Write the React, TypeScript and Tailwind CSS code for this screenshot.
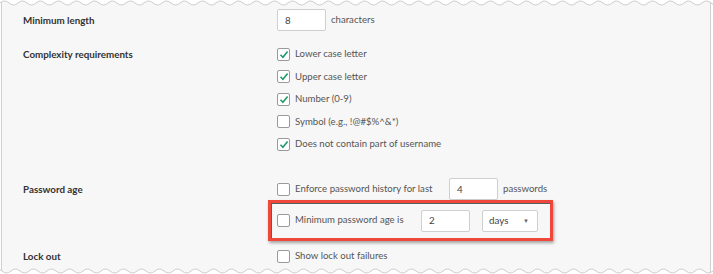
const font = { fontFamily: '"Lato", "Liberation Sans", sans-serif' };

function Check({ on }: { on?: boolean }) {
  return (
    <span className="flex h-[13px] w-[13px] shrink-0 items-center justify-center rounded-[2px] border border-[#9a9a9a] bg-white">
      {on && (
        <svg width="10" height="9" viewBox="0 0 10 9">
          <path d="M1.5 4.8 L3.9 7.2 L8.6 1.6" fill="none" stroke="#1f9a6a" strokeWidth="1.6" />
        </svg>
      )}
    </span>
  );
}

function Opt({ on, children }: { on?: boolean; children: React.ReactNode }) {
  return (
    <div className="flex h-[22.5px] items-center">
      <Check on={on} />
      <span className="ml-[5px] text-[9.6px] text-[#555]">{children}</span>
    </div>
  );
}

function Field({ value }: { value: string }) {
  return (
    <div className="flex h-[22px] w-[49px] shrink-0 items-center rounded-[2px] border border-[#cfcfcf] bg-white pl-[7px] text-[9.8px] text-[#444]">
      {value}
    </div>
  );
}

function Wave({ bottom }: { bottom?: boolean }) {
  const n = 40;
  let d = 'M0 3';
  for (let i = 0; i < n; i++) {
    const x = i * 18;
    d += ` Q${x + 4.5} -1 ${x + 9} 3 Q${x + 13.5} 7 ${x + 18} 3`;
  }
  return (
    <svg
      width="713"
      height="7"
      viewBox="0 0 713 7"
      className={`absolute left-0 ${bottom ? 'bottom-0 rotate-180' : 'top-0'}`}
    >
      <path d={`${d} L720 0 L0 0 Z`} fill="#fff" />
      <path d={d} fill="none" stroke="#cdcdcd" strokeWidth="1" />
    </svg>
  );
}

const label = 'w-[254px] shrink-0 text-[9.8px] font-bold text-[#333]';
const txt = 'text-[9.6px] text-[#555]';

export default function App() {
  return (
    <div className="relative h-[274px] w-[713px] overflow-hidden whitespace-nowrap bg-white" style={font}>
      <div className="absolute inset-y-0 left-[1px] right-[2px] border-x border-[#cfcfcf] bg-[#f7f7f7]" />
      <div className="relative pl-[23px] pt-[9px]">
        <div className="flex h-[22px] items-center">
          <div className={label}>Minimum length</div>
          <Field value="8" />
          <span className={`ml-[5px] ${txt}`}>characters</span>
        </div>

        <div className="mt-[12px] flex">
          <div className={`flex h-[22.5px] items-center ${label}`}>Complexity requirements</div>
          <div className="flex flex-col">
            <Opt on>Lower case letter</Opt>
            <Opt on>Upper case letter</Opt>
            <Opt on>Number (0-9)</Opt>
            <Opt>Symbol (e.g., !@#$%^&*)</Opt>
            <Opt on>Does not contain part of username</Opt>
          </div>
        </div>

        <div className="mt-[22.5px] flex h-[22px] items-center">
          <div className={label}>Password age</div>
          <Check />
          <span className={`ml-[5px] w-[154px] ${txt}`}>Enforce password history for last</span>
          <Field value="4" />
          <span className={`ml-[5px] ${txt}`}>passwords</span>
        </div>

        <div className="flex">
          <div className="w-[245px] shrink-0" />
          <div className="flex h-[41px] w-[285px] shrink-0 items-center border-[3px] border-[#f0473c] pl-[6px] shadow-[inset_1px_1px_0_#56615f,1px_2px_3px_rgba(0,0,0,0.35)]">
            <Check />
            <span className={`ml-[5px] w-[126px] ${txt}`}>Minimum password age is</span>
            <Field value="2" />
            <div className="ml-[12px] flex h-[22px] w-[56px] items-center justify-between rounded-[2px] border border-[#cfcfcf] bg-white pl-[6px] pr-[8px] text-[9.8px] text-[#444]">
              <span>days</span>
              <span className="text-[6px] text-[#666]">▼</span>
            </div>
          </div>
        </div>

        <div className="mt-[4px] flex h-[22px] items-center">
          <div className={label}>Lock out</div>
          <Check />
          <span className={`ml-[5px] ${txt}`}>Show lock out failures</span>
        </div>
      </div>
      <Wave />
      <Wave bottom />
    </div>
  );
}
